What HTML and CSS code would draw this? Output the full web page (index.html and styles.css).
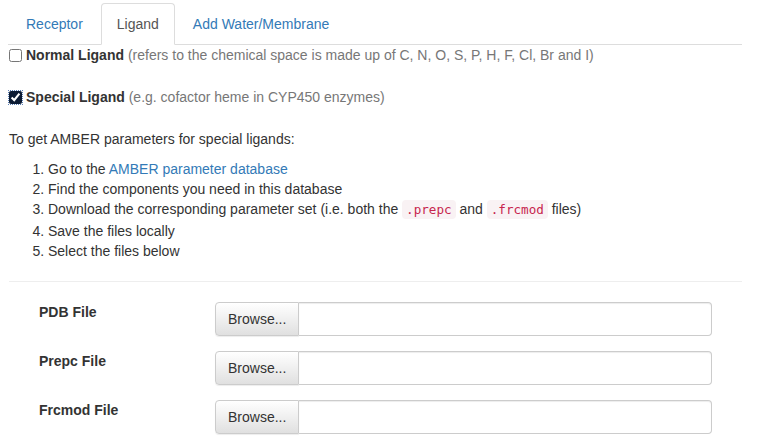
FILE: index.html
```html
<!DOCTYPE html>
<html>
<head>
<meta charset="utf-8">
<link rel="stylesheet" href="styles.css">
</head>
<body>
<div class="page">
  <ul class="tabs">
    <li><a class="tab" href="#">Receptor</a></li>
    <li><a class="tab active" href="#">Ligand</a></li>
    <li><a class="tab" href="#">Add Water/Membrane</a></li>
  </ul>

  <div class="check-row first">
    <input type="checkbox" class="cb">
    <span><b>Normal Ligand</b> <span class="muted">(refers to the chemical space is made up of C, N, O, S, P, H, F, Cl, Br and I)</span></span>
  </div>
  <div class="check-row second">
    <input type="checkbox" class="cb focused" checked>
    <span><b>Special Ligand</b> <span class="muted">(e.g. cofactor heme in CYP450 enzymes)</span></span>
  </div>

  <p class="intro">To get AMBER parameters for special ligands:</p>
  <ol class="steps">
    <li>Go to the <a class="link" href="#">AMBER parameter database</a></li>
    <li>Find the components you need in this database</li>
    <li class="with-code">Download the corresponding parameter set (i.e. both the <code>.prepc</code> and <code>.frcmod</code> files)</li>
    <li>Save the files locally</li>
    <li>Select the files below</li>
  </ol>
  <hr class="rule">

  <div class="form">
    <div class="form-row">
      <label class="form-label">PDB File</label>
      <div class="file-input"><span class="browse">Browse...</span><span class="file-name"></span></div>
    </div>
    <div class="form-row">
      <label class="form-label">Prepc File</label>
      <div class="file-input"><span class="browse">Browse...</span><span class="file-name"></span></div>
    </div>
    <div class="form-row">
      <label class="form-label">Frcmod File</label>
      <div class="file-input"><span class="browse">Browse...</span><span class="file-name"></span></div>
    </div>
  </div>
</div>
</body>
</html>
```

FILE: styles.css
```css
* { box-sizing: border-box; }
html, body { margin: 0; padding: 0; background: #fff; }
body {
  font-family: "Liberation Sans", Arial, sans-serif;
  font-size: 14px;
  line-height: 20px;
  color: #333;
}
.page {
  width: 742px;
  padding: 3px 0 0 8px;
}
.tabs {
  list-style: none;
  margin: 0;
  padding: 0 0 0 2px;
  display: flex;
  border-bottom: 1px solid #ddd;
}
.tabs li {
  margin: 0 2px -1px 0;
}
.tab {
  display: block;
  padding: 10px 15px;
  line-height: 20px;
  border: 1px solid transparent;
  border-radius: 4px 4px 0 0;
  color: #337ab7;
  text-decoration: none;
}
.tab.active {
  color: #555;
  background: #fff;
  border-color: #ddd #ddd transparent #ddd;
}
.check-row {
  display: flex;
  align-items: center;
  height: 20px;
}
.check-row.first { margin-top: 0; }
.check-row.second { margin-top: 22px; }
.cb {
  width: 13px;
  height: 13px;
  margin: 0 4px 0 1px;
}
.cb.focused {
  accent-color: #0b1a33;
  outline: 1px dotted #5b7fb5;
  outline-offset: 0;
}
.muted { color: #777; }
.intro { margin: 22px 0 10px 1px; }
.steps {
  margin: 0 0 10px;
  padding-left: 40px;
}
.steps li.with-code { padding-bottom: 1px; }
.link { color: #337ab7; text-decoration: none; }
code {
  font-family: "DejaVu Sans Mono", monospace;
  font-size: 90%;
  padding: 2px 4px;
  color: #c7254e;
  background: #f9f2f4;
  border-radius: 4px;
}
.rule {
  border: 0;
  border-top: 1px solid #eee;
  margin: 20px 0 20px 1px;
}
.form {
  padding-left: 31px;
}
.form-row {
  display: grid;
  grid-template-columns: 176px 497px;
  margin-bottom: 15px;
}
.form-label {
  font-weight: bold;
  line-height: 20px;
}
.file-input {
  display: flex;
  height: 34px;
}
.browse {
  width: 84px;
  padding: 6px 12px;
  line-height: 20px;
  border: 1px solid #ccc;
  border-radius: 4px 0 0 4px;
  background: linear-gradient(to bottom, #fff 0%, #e0e0e0 100%);
  color: #333;
  box-shadow: inset 0 1px 0 rgba(255,255,255,.15), 0 1px 1px rgba(0,0,0,.075);
}
.file-name {
  flex: 1;
  border: 1px solid #ccc;
  border-left: 0;
  border-radius: 0 4px 4px 0;
  box-shadow: inset 0 1px 1px rgba(0,0,0,.075);
}
```
